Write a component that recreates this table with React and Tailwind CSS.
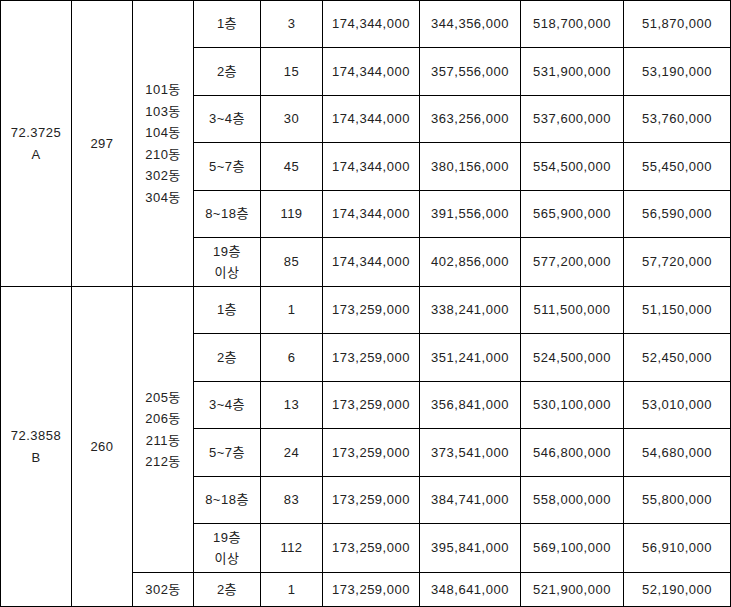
const groups = [
    {
        area: ["72.3725", "A"],
        units: "297",
        blocks: [
            {
                dong: ["101동", "103동", "104동", "210동", "302동", "304동"],
                rows: [
                    ["1층", "3", "174,344,000", "344,356,000", "518,700,000", "51,870,000"],
                    ["2층", "15", "174,344,000", "357,556,000", "531,900,000", "53,190,000"],
                    ["3~4층", "30", "174,344,000", "363,256,000", "537,600,000", "53,760,000"],
                    ["5~7층", "45", "174,344,000", "380,156,000", "554,500,000", "55,450,000"],
                    ["8~18층", "119", "174,344,000", "391,556,000", "565,900,000", "56,590,000"],
                    ["19층\n이상", "85", "174,344,000", "402,856,000", "577,200,000", "57,720,000"],
                ],
            },
        ],
    },
    {
        area: ["72.3858", "B"],
        units: "260",
        blocks: [
            {
                dong: ["205동", "206동", "211동", "212동"],
                rows: [
                    ["1층", "1", "173,259,000", "338,241,000", "511,500,000", "51,150,000"],
                    ["2층", "6", "173,259,000", "351,241,000", "524,500,000", "52,450,000"],
                    ["3~4층", "13", "173,259,000", "356,841,000", "530,100,000", "53,010,000"],
                    ["5~7층", "24", "173,259,000", "373,541,000", "546,800,000", "54,680,000"],
                    ["8~18층", "83", "173,259,000", "384,741,000", "558,000,000", "55,800,000"],
                    ["19층\n이상", "112", "173,259,000", "395,841,000", "569,100,000", "56,910,000"],
                ],
            },
            {
                dong: ["302동"],
                short: true,
                rows: [
                    ["2층", "1", "173,259,000", "348,641,000", "521,900,000", "52,190,000"],
                ],
            },
        ],
    },
]

const heights = ["h-[47px]", "h-[48px]", "h-[47px]", "h-[48px]", "h-[47px]", "h-[49px]"]

function Lines({ items }) {
    return items.map((t, i) => <div key={i}>{t}</div>)
}

export default function App() {
    const cell = "border border-black text-center align-middle p-0"
    return (
        <div className="bg-white w-[731px] h-[607px] overflow-hidden">
            <table
                className="table-fixed border-collapse w-[730px] text-[13px] tracking-[0.5px] leading-[21.5px] text-[#222]"
                style={{ fontFamily: '"Liberation Sans", "Noto Sans CJK KR", sans-serif' }}
            >
                <colgroup>
                    <col className="w-[71px]" />
                    <col className="w-[61px]" />
                    <col className="w-[61px]" />
                    <col className="w-[67px]" />
                    <col className="w-[62px]" />
                    <col className="w-[97px]" />
                    <col className="w-[101px]" />
                    <col className="w-[103px]" />
                    <col className="w-[107px]" />
                </colgroup>
                <tbody>
                    {groups.map((g, gi) => {
                        const total = g.blocks.reduce((n, b) => n + b.rows.length, 0)
                        return g.blocks.map((b, bi) =>
                            b.rows.map((r, ri) => (
                                <tr key={`${gi}-${bi}-${ri}`} className={b.short ? "h-[34px]" : heights[ri]}>
                                    {bi === 0 && ri === 0 && (
                                        <>
                                            <td rowSpan={total} className={cell}>
                                                <Lines items={g.area} />
                                            </td>
                                            <td rowSpan={total} className={cell}>{g.units}</td>
                                        </>
                                    )}
                                    {ri === 0 && (
                                        <td rowSpan={b.rows.length} className={cell}>
                                            <Lines items={b.dong} />
                                        </td>
                                    )}
                                    {r.map((v, ci) => (
                                        <td key={ci} className={cell}>
                                            <Lines items={v.split("\n")} />
                                        </td>
                                    ))}
                                </tr>
                            ))
                        )
                    })}
                </tbody>
            </table>
        </div>
    )
}
